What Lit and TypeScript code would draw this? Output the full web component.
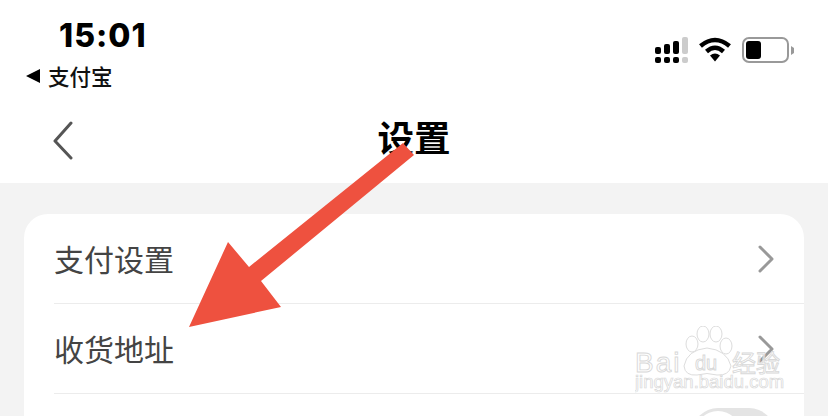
import { LitElement, html, css, svg } from 'lit';
import { customElement } from 'lit/decorators.js';

const chevron = svg`<svg class="chev" width="18" height="28" viewBox="0 0 18 28"><path d="M3 2 L15 14 L3 26" fill="none" stroke="#999" stroke-width="3" stroke-linecap="round" stroke-linejoin="round"/></svg>`;

@customElement('app-root')
export class AppRoot extends LitElement {
  static styles = css`
    :host {
      display: block;
      position: relative;
      width: 828px;
      height: 416px;
      overflow: hidden;
      background: #f3f3f3;
      font-family: 'Liberation Sans', 'Noto Sans CJK SC', sans-serif;
    }
    header {
      height: 183px;
      background: #fff;
      display: flex;
      flex-direction: column;
    }
    .status {
      height: 99px;
      display: flex;
      justify-content: space-between;
      box-sizing: border-box;
      padding: 17px 32px 0 26px;
    }
    .time {
      font-family: Inter, sans-serif;
      font-weight: 800;
      font-size: 32px;
      line-height: 37px;
      letter-spacing: 1px;
      margin-left: 33px;
      color: #000;
    }
    .back-app {
      display: flex;
      align-items: center;
      gap: 8px;
      margin-top: 8px;
      font-family: 'Noto Sans CJK SC', sans-serif;
      font-size: 21.5px;
      font-weight: 500;
      line-height: 28px;
      color: #111;
    }
    .tri {
      width: 0;
      height: 0;
      border-style: solid;
      border-width: 7px 14px 7px 0;
      border-color: transparent #000 transparent transparent;
    }
    .icons {
      display: flex;
      align-items: flex-start;
      gap: 11px;
      height: 26px;
      margin-top: 20px;
    }
    .nav {
      position: relative;
      display: flex;
      align-items: center;
      justify-content: center;
      height: 78px;
    }
    .nav svg {
      position: absolute;
      left: 52px;
      top: 22px;
    }
    h1 {
      margin: -3px 0 0;
      font-family: 'Noto Sans CJK SC', sans-serif;
      font-size: 36.5px;
      font-weight: 700;
      color: #000;
      line-height: 76px;
    }
    .card {
      margin: 31px 24px 0;
      background: #fff;
      border-radius: 24px;
    }
    .row {
      display: flex;
      align-items: center;
      justify-content: space-between;
      height: 89px;
      margin-left: 30px;
      padding-right: 29px;
      border-bottom: 1px solid #ececec;
      font-family: 'Noto Sans CJK SC', sans-serif;
      font-size: 30px;
      color: #444;
    }
    .row span.label {
      margin-top: -2px;
    }
    .row.last {
      border-bottom: none;
      height: 90px;
      align-items: flex-start;
    }
    .toggle {
      width: 83px;
      height: 52px;
      border-radius: 26px;
      background: #e4e4e4;
      position: relative;
      margin-top: 14px;
    }
    .toggle::after {
      content: '';
      position: absolute;
      left: 3px;
      top: 3px;
      width: 46px;
      height: 46px;
      border-radius: 50%;
      background: #fff;
    }
    .arrow {
      position: absolute;
      left: 0;
      top: 0;
      pointer-events: none;
    }
    .mark {
      position: absolute;
      left: 635px;
      top: 326px;
      width: 150px;
      height: 76px;
      pointer-events: none;
    }
    .mark text {
      fill: rgba(255, 255, 255, 0.6);
      stroke: #d8d8d8;
      stroke-width: 0.9;
    }
    .mark .bai {
      font-family: 'Liberation Sans', sans-serif;
      font-size: 28px;
      letter-spacing: 2px;
    }
    .mark .du {
      font-family: 'Liberation Sans', sans-serif;
      font-size: 20px;
    }
    .mark .jy {
      font-family: 'Noto Sans CJK SC', sans-serif;
      font-size: 24px;
    }
    .mark .url {
      font-family: 'Liberation Sans', sans-serif;
      font-size: 18.5px;
      stroke-width: 0.7;
    }
  `;

  render() {
    return html`
      <header>
        <div class="status">
          <div>
            <div class="time">15:01</div>
            <div class="back-app"><span class="tri"></span>支付宝</div>
          </div>
          <div class="icons">
            <svg width="33" height="26" viewBox="0 0 33 26">
              <rect x="0" y="10" width="6" height="7" rx="2" fill="#000" />
              <rect x="9" y="7" width="6" height="10" rx="2" fill="#000" />
              <rect x="18" y="4" width="6" height="13" rx="2" fill="#000" />
              <rect x="27" y="0" width="6" height="17" rx="2" fill="#ccc" />
              <rect x="0" y="20" width="6" height="6" rx="2" fill="#000" />
              <rect x="9" y="20" width="6" height="6" rx="2" fill="#000" />
              <rect x="18" y="20" width="6" height="6" rx="2" fill="#000" />
              <rect x="27" y="20" width="6" height="6" rx="2" fill="#ccc" />
            </svg>
            <svg width="32" height="26" viewBox="0 0 32 26">
              <path d="M1.500 9 Q16 -3 30.500 9" fill="none" stroke="#000" stroke-width="4.500" />
              <path d="M7.500 14.500 Q16 7 24.500 14.500" fill="none" stroke="#000" stroke-width="4.500" />
              <path d="M11 18.500 Q16 14.500 21 18.500 L16 24.500 Z" fill="#000" />
            </svg>
            <svg width="54" height="26" viewBox="0 0 54 26">
              <rect x="1" y="1" width="45" height="24" rx="6" fill="none" stroke="#999" stroke-width="2" />
              <rect x="4" y="4" width="15" height="18" rx="3" fill="#000" />
              <path d="M49 9 L52 11 V16 L49 18 Z" fill="#999" />
            </svg>
          </div>
        </div>
        <div class="nav">
          <svg width="22" height="40" viewBox="0 0 22 40">
            <path d="M19 2 L3 20 L19 37" fill="none" stroke="#555" stroke-width="3" stroke-linecap="round" stroke-linejoin="round" />
          </svg>
          <h1>设置</h1>
        </div>
      </header>
      <section class="card">
        <div class="row"><span class="label">支付设置</span> ${chevron}</div>
        <div class="row"><span class="label">收货地址</span> ${chevron}</div>
        <div class="row last"><span></span><span class="toggle"></span></div>
      </section>
      <svg class="arrow" width="828" height="416" viewBox="0 0 828 416">
        <polygon points="403,143 414,155 261,281 281,307 189,327 228,242 249,267" fill="#ee513f" />
      </svg>
      <svg class="mark" viewBox="0 0 150 76">
        <text class="bai" x="0" y="46">Bai</text>
        <g fill="rgba(255,255,255,0.6)" stroke="#d8d8d8" stroke-width="0.9">
          <ellipse cx="57" cy="18" rx="6" ry="8" />
          <ellipse cx="68" cy="8" rx="6" ry="8" />
          <ellipse cx="81" cy="8" rx="6" ry="8" />
          <ellipse cx="91" cy="20" rx="6" ry="8" />
          <path d="M49 40 Q52 24 72 22 Q92 24 96 40 Q94 50 82 49 Q72 46 62 49 Q50 50 49 40 Z" />
        </g>
        <text class="du" x="60" y="44">du</text>
        <text class="jy" x="97" y="46">经验</text>
        <text class="url" x="0" y="62">jingyan.baidu.com</text>
      </svg>
    `;
  }
}
